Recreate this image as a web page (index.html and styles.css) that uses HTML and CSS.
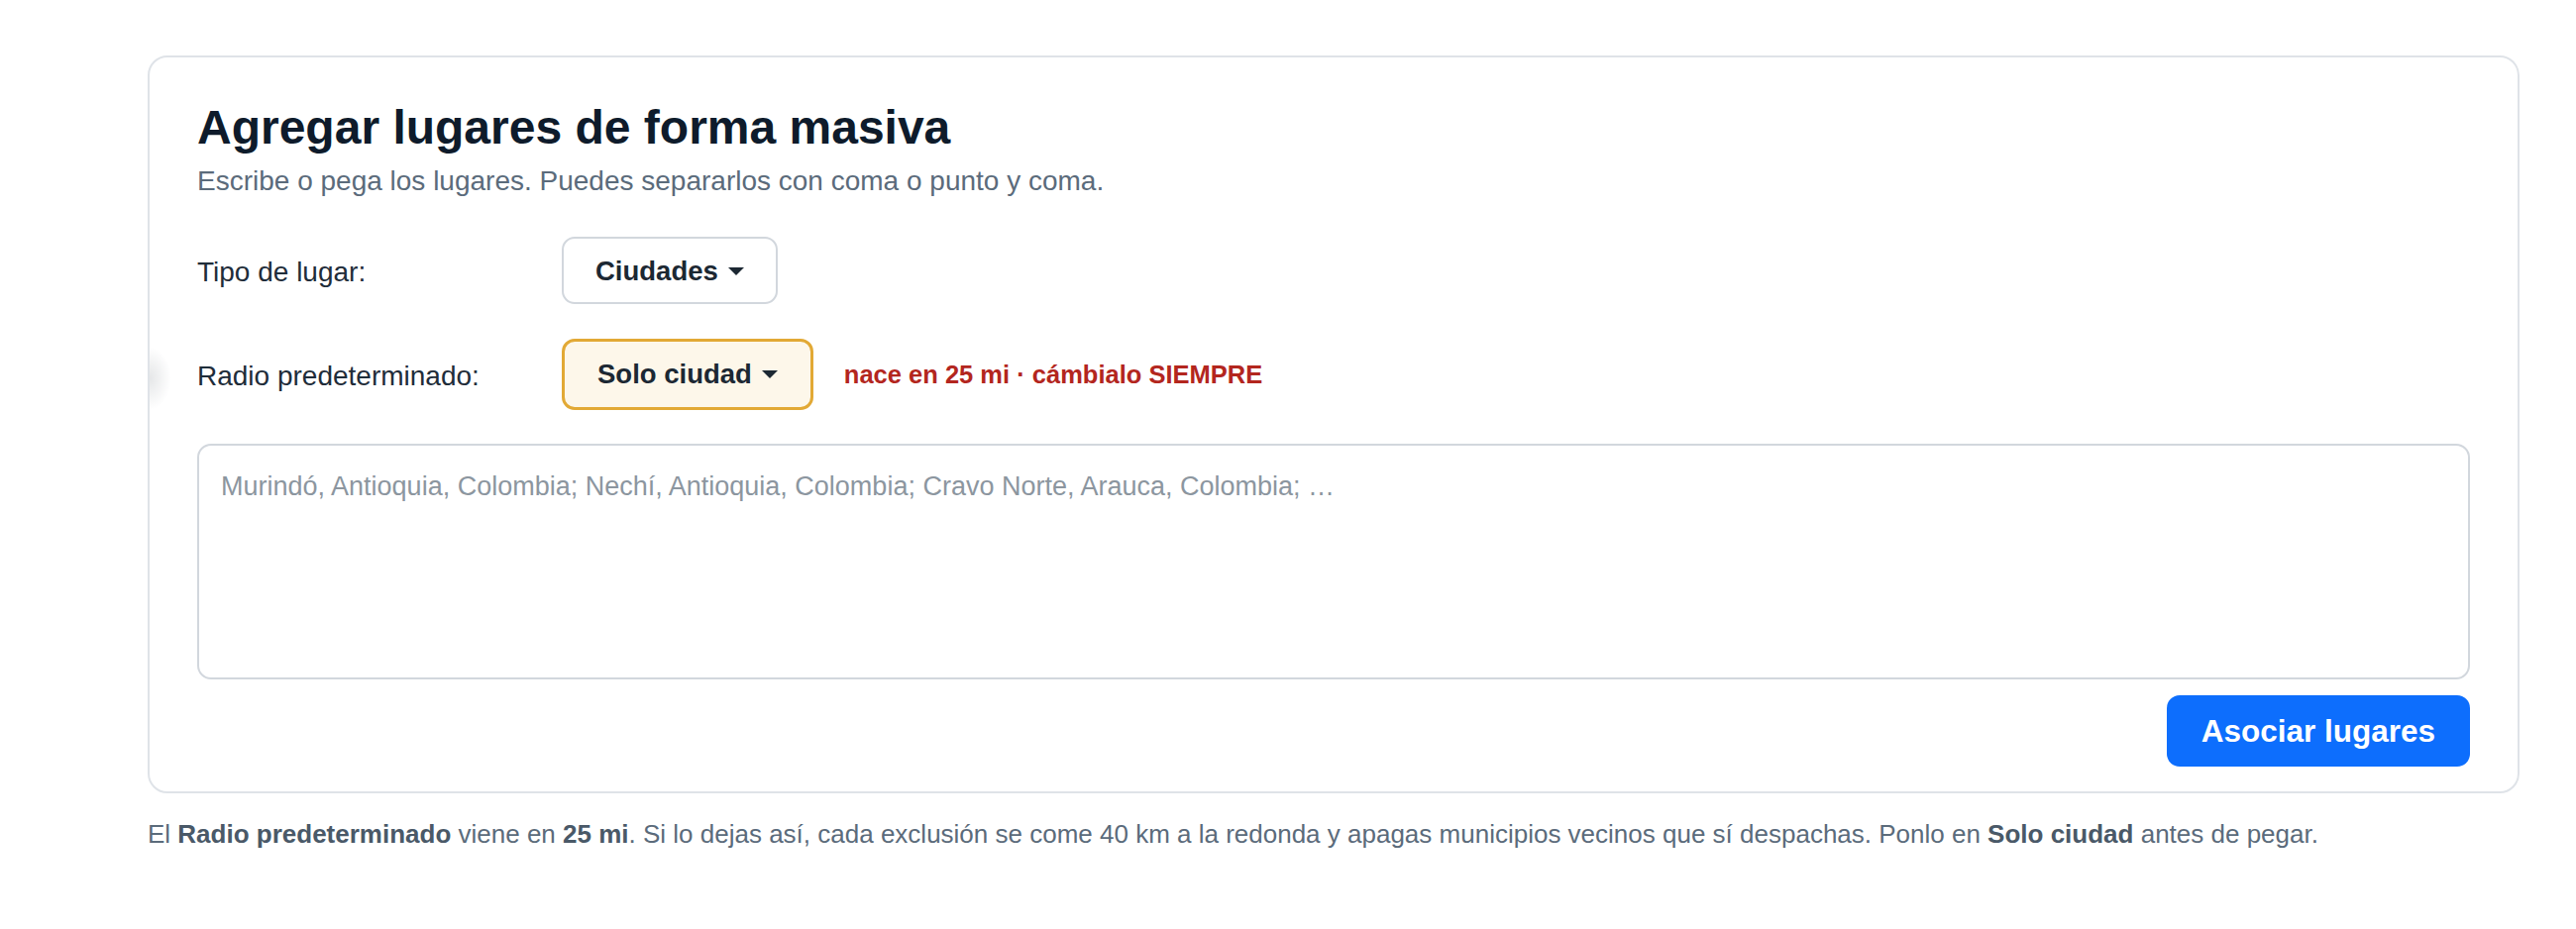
FILE: index.html
```html
<!DOCTYPE html>
<html lang="es">
<head>
  <meta charset="UTF-8">
  <meta name="viewport" content="width=device-width, initial-scale=1.0">
  <title>Agregar lugares de forma masiva</title>
  <link rel="stylesheet" href="styles.css">
</head>
<body>
  <div class="container">
    <div class="card">
      <div class="edge-shadow"></div>

      <h1 class="card-title">Agregar lugares de forma masiva</h1>
      <p class="card-subtitle">Escribe o pega los lugares. Puedes separarlos con coma o punto y coma.</p>

      <div class="field-row">
        <div class="field-label">Tipo de lugar:</div>
        <button class="dropdown">Ciudades <span class="caret"></span></button>
      </div>

      <div class="field-row">
        <div class="field-label">Radio predeterminado:</div>
        <button class="dropdown dropdown-warn">Solo ciudad <span class="caret"></span></button>
        <span class="warn-note">nace en 25 mi · cámbialo SIEMPRE</span>
      </div>

      <textarea class="places-input" placeholder="Murindó, Antioquia, Colombia; Nechí, Antioquia, Colombia; Cravo Norte, Arauca, Colombia; …"></textarea>

      <div class="actions">
        <button class="btn-primary">Asociar lugares</button>
      </div>
    </div>

    <p class="hint">El <strong>Radio predeterminado</strong> viene en <strong>25 mi</strong>. Si lo dejas así, cada exclusión se come 40 km a la redonda y apagas municipios vecinos que sí despachas. Ponlo en <strong>Solo ciudad</strong> antes de pegar.</p>
  </div>
</body>
</html>
```

FILE: styles.css
```css
body {
  font-family: 'Liberation Sans', Arial, Helvetica, sans-serif;
  margin: 0;
  padding: 0;
  background-color: #fff;
  color: #1f2d3a;
}

.container {
  width: 2394px;
  margin: 0 0 0 149px;
  padding-top: 56px;
}

.card {
  position: relative;
  background-color: #fff;
  border: 2px solid #dfe3e8;
  border-radius: 20px;
  padding: 43px 48px 25px 48px;
}

.edge-shadow {
  position: absolute;
  left: 0;
  top: 292px;
  width: 22px;
  height: 64px;
  background: radial-gradient(ellipse at left center, rgba(70, 80, 90, 0.14), rgba(70, 80, 90, 0) 70%);
}

.card-title {
  margin: 0;
  font-size: 48px;
  line-height: 56px;
  font-weight: 700;
  color: #0e1b2b;
}

.card-subtitle {
  margin: 8px 0 0 0;
  font-size: 28px;
  line-height: 36px;
  color: #5b6b7b;
}

.field-row {
  display: flex;
  align-items: center;
  margin-top: 38px;
}

.field-row + .field-row {
  margin-top: 35px;
}

.field-label {
  width: 368px;
  padding-top: 3px;
  font-size: 28px;
  color: #1f2d3a;
}

.dropdown {
  display: inline-flex;
  align-items: center;
  font-family: inherit;
  font-size: 27.5px;
  font-weight: 700;
  line-height: 30px;
  color: #1c2833;
  background-color: #fff;
  border: 2px solid #d2d7dd;
  border-radius: 13px;
  padding: 18px 32px 16px 32px;
  cursor: pointer;
}

.dropdown-warn {
  background-color: #fdf7ea;
  border: 3px solid #e2a935;
  padding: 18px 33px;
}

.caret {
  display: inline-block;
  width: 0;
  height: 0;
  margin-left: 10px;
  border-left: 8px solid transparent;
  border-right: 8px solid transparent;
  border-top: 8px solid #1c2833;
}

.warn-note {
  margin-left: 31px;
  font-size: 25.5px;
  font-weight: 700;
  color: #b3261e;
}

.places-input {
  display: block;
  box-sizing: border-box;
  width: 100%;
  height: 238px;
  margin-top: 34px;
  padding: 26px 22px;
  font-family: inherit;
  font-size: 27px;
  line-height: 31px;
  color: #1f2d3a;
  border: 2px solid #d2d7dd;
  border-radius: 14px;
  resize: none;
  outline: none;
}

.places-input::placeholder {
  color: #8c969f;
}

.actions {
  display: flex;
  justify-content: flex-end;
  margin-top: 16px;
}

.btn-primary {
  font-family: inherit;
  font-size: 31.5px;
  font-weight: 700;
  line-height: 36px;
  color: #fff;
  background-color: #0d6efd;
  border: none;
  border-radius: 13px;
  padding: 18px 35px;
  cursor: pointer;
}

.hint {
  margin: 23px 0 0 0;
  font-size: 26px;
  line-height: 36px;
  color: #5b6b7b;
}

.hint strong {
  color: #4a5968;
}
```
